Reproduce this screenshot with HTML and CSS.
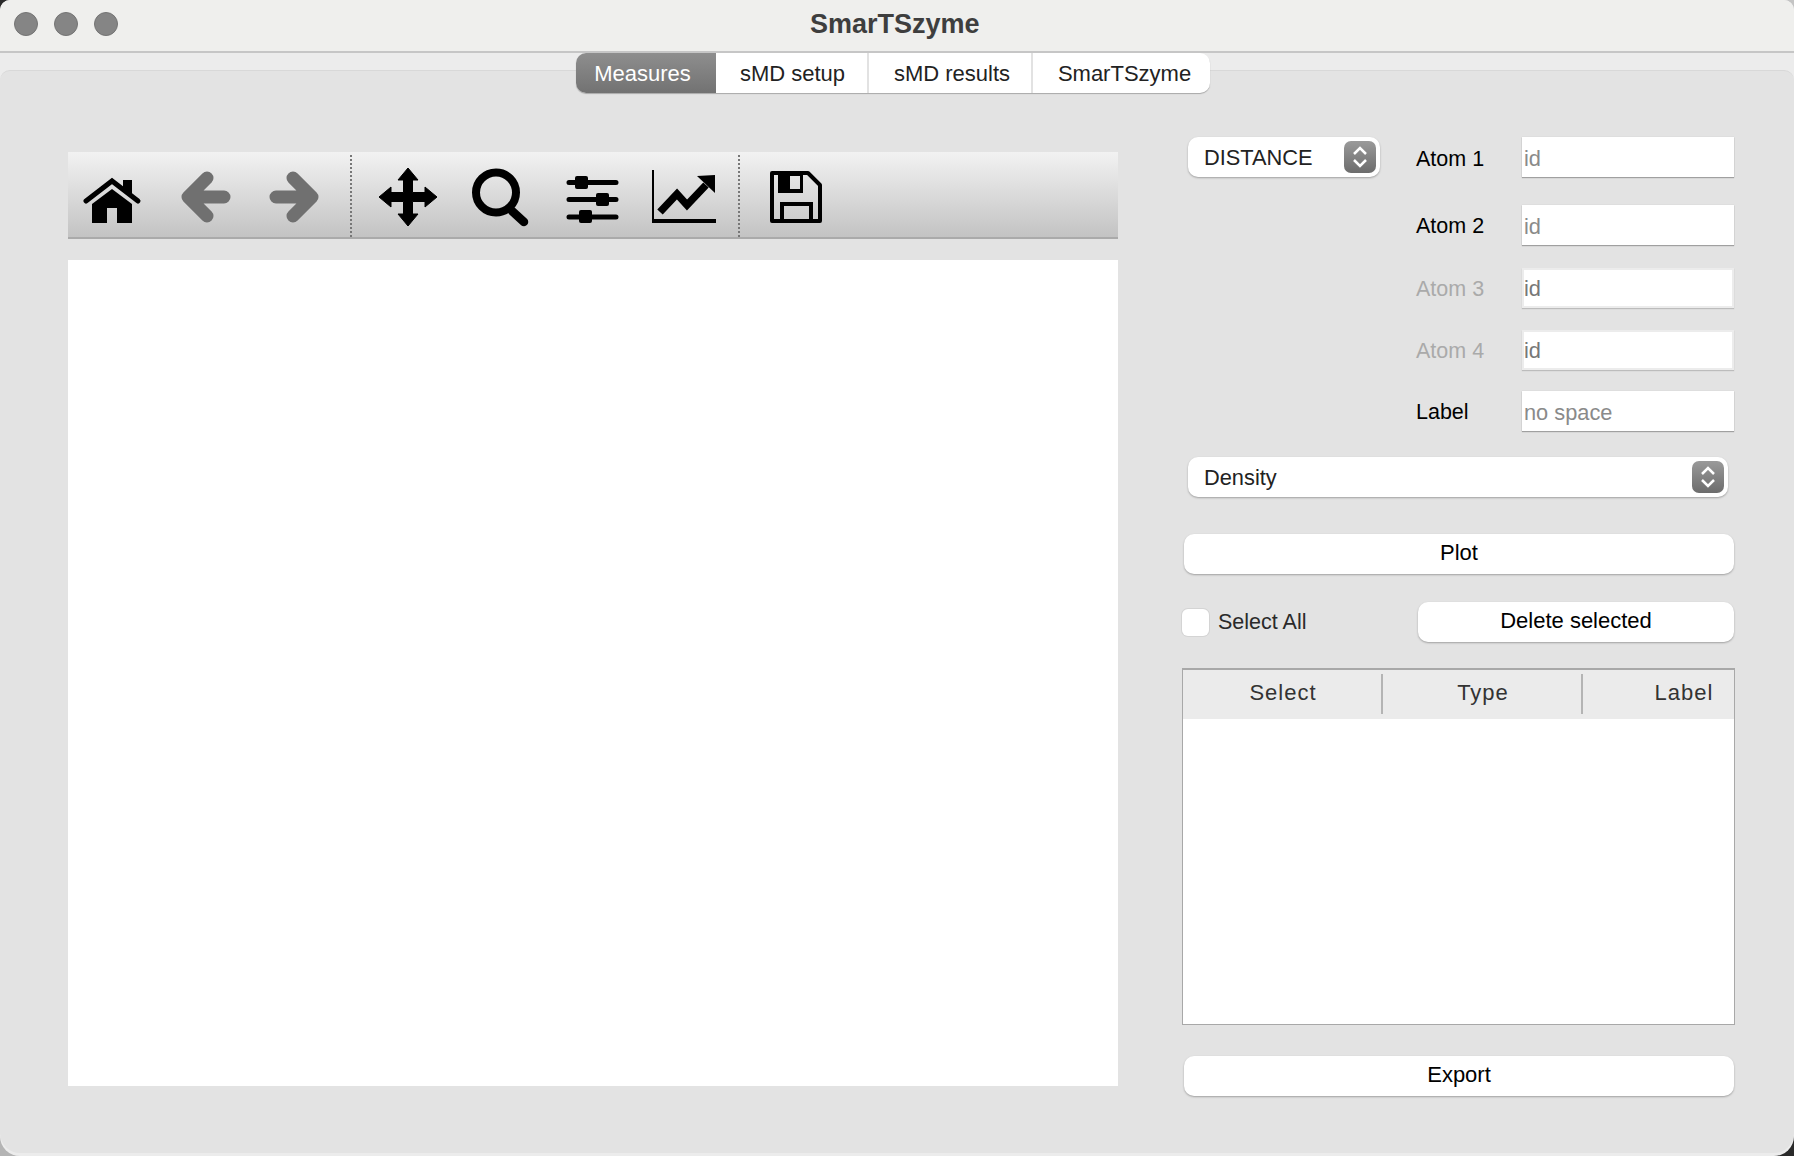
FILE: index.html
```html
<!DOCTYPE html>
<html lang="en">
<head>
<meta charset="UTF-8">
<meta name="viewport" content="width=device-width, initial-scale=1.0">
<title>SmarTSzyme</title>
<link rel="stylesheet" href="styles.css">
</head>
<body>
<div class="window">

    <header class="titlebar">
        <div class="lights">
            <span class="light"></span>
            <span class="light"></span>
            <span class="light"></span>
        </div>
        <h1 class="app-title">SmarTSzyme</h1>
    </header>

    <nav class="tabs">
        <a class="tab tab-active">Measures</a>
        <a class="tab tab-setup">sMD setup</a>
        <a class="tab tab-results">sMD results</a>
        <a class="tab tab-about">SmarTSzyme</a>
    </nav>

    <main class="pane">
        <section class="plot-area">
            <div class="toolbar">
                <svg class="tool" viewBox="0 0 60 60">
                    <path d="M4 34 30 14 56 34" fill="none" stroke="#000" stroke-width="5" stroke-linecap="round" stroke-linejoin="miter"/>
                    <path d="M41 13h9v17l-9-7z"/>
                    <path d="M30 22 10 37v19h15V41h10v15h15V37z"/>
                </svg>
                <svg class="tool" viewBox="0 0 60 60">
                    <path d="M15 30H50M33 11 14 30 33 49" fill="none" stroke="#707070" stroke-width="13" stroke-linecap="round" stroke-linejoin="round"/>
                </svg>
                <svg class="tool" viewBox="0 0 60 60">
                    <path d="M45 30H10M27 11 46 30 27 49" fill="none" stroke="#707070" stroke-width="13" stroke-linecap="round" stroke-linejoin="round"/>
                </svg>
                <span class="tool-sep"></span>
                <svg class="tool" viewBox="0 0 60 60">
                    <path d="M30 1 40 13H34.5V25.5H47V20L59 30 47 40V34.5H34.5V47H40L30 59 20 47H25.5V34.5H13V40L1 30 13 20V25.5H25.5V13H20Z" stroke="#000" stroke-width="1" stroke-linejoin="round"/>
                </svg>
                <svg class="tool" viewBox="0 0 60 60">
                    <circle cx="26" cy="25.5" r="20" fill="none" stroke="#000" stroke-width="8"/>
                    <path d="M42 44 54 55" stroke="#000" stroke-width="8.5" stroke-linecap="round"/>
                </svg>
                <svg class="tool" viewBox="0 0 60 60">
                    <path d="M7 15.5H54M7 32.5H54M7 50H54" stroke="#000" stroke-width="5" stroke-linecap="round"/>
                    <rect x="13" y="9" width="13" height="13" rx="2"/>
                    <rect x="34" y="26" width="13" height="13" rx="2"/>
                    <rect x="17" y="43" width="13" height="13" rx="2"/>
                </svg>
                <svg class="tool" viewBox="0 0 60 60">
                    <path d="M-2 3H0V52H62V56H-2Z"/>
                    <path d="M6 45 23 27 33 38 52 18" fill="none" stroke="#000" stroke-width="7.5" stroke-linejoin="miter"/>
                    <path d="M61 8 43 9 61 26Z"/>
                </svg>
                <span class="tool-sep"></span>
                <svg class="tool" viewBox="0 0 60 60">
                    <path d="M6 6H42L54 18V54H6Z" fill="none" stroke="#000" stroke-width="4" stroke-linejoin="round"/>
                    <path d="M12 6H37V26H12ZM24 9V22H34V9Z" fill-rule="evenodd"/>
                    <path d="M16 54V37H45V54" fill="none" stroke="#000" stroke-width="4"/>
                </svg>
            </div>
            <div class="canvas"></div>
        </section>

        <section class="side">
            <div class="atom-row atom-row-first">
                <div class="combo combo-short">
                    <span class="combo-text">DISTANCE</span>
                    <span class="combo-arrows">
                        <svg viewBox="0 0 32 32"><path d="M10 13 16 7 22 13M10 19 16 25 22 19" fill="none" stroke="#fff" stroke-width="2.5"/></svg>
                    </span>
                </div>
                <label class="field-label">Atom 1</label>
                <input class="field" type="text" placeholder="id">
            </div>
            <div class="atom-row row-two">
                <label class="field-label">Atom 2</label>
                <input class="field" type="text" placeholder="id">
            </div>
            <div class="atom-row row-three">
                <label class="field-label field-label-off">Atom 3</label>
                <input class="field field-off" type="text" placeholder="id" disabled>
            </div>
            <div class="atom-row row-four">
                <label class="field-label field-label-off">Atom 4</label>
                <input class="field field-off" type="text" placeholder="id" disabled>
            </div>
            <div class="atom-row row-five">
                <label class="field-label">Label</label>
                <input class="field" type="text" placeholder="no space">
            </div>

            <div class="combo combo-wide">
                <span class="combo-text">Density</span>
                <span class="combo-arrows">
                    <svg viewBox="0 0 32 32"><path d="M10 13 16 7 22 13M10 19 16 25 22 19" fill="none" stroke="#fff" stroke-width="2.5"/></svg>
                </span>
            </div>

            <button class="btn btn-plot">Plot</button>

            <div class="select-row">
                <label class="check-label"><span class="check"></span>Select All</label>
                <button class="btn btn-delete">Delete selected</button>
            </div>

            <div class="table">
                <div class="thead">
                    <div class="th">Select</div>
                    <div class="th">Type</div>
                    <div class="th th-last">Label</div>
                </div>
            </div>

            <button class="btn btn-export">Export</button>
        </section>
    </main>
</div>
</body>
</html>
```

FILE: styles.css
```css
* {
    box-sizing: border-box;
}

html {
    background: #2a2a2a;
}

body {
    margin: 0;
    width: 1794px;
    height: 1156px;
    /* what shows behind the rounded window corners */
    background: conic-gradient(#c4c4c4 90deg, #2a2a2a 90deg 180deg, #b4b4b4 180deg 270deg, #2a2a2a 270deg);
    font-family: "Liberation Sans", Arial, sans-serif;
}

.window {
    width: 1794px;
    height: 1156px;
    display: flex;
    flex-direction: column;
    overflow: hidden;
    background: #ececec;
    border-radius: 10px 10px 20px 20px;
}

/* title bar */
.titlebar {
    height: 53px;
    flex: none;
    display: flex;
    align-items: center;
    padding: 0 0 3px 14px;
    background: #efefed;
    border-bottom: 2px solid #c6c6c6;
}

.lights {
    display: flex;
    gap: 16px;
    width: 796px;
}

.light {
    width: 24px;
    height: 24px;
    border-radius: 50%;
    background: #858585;
    border: 1px solid #747474;
}

.app-title {
    margin: 0;
    font-size: 27px;
    font-weight: bold;
    color: #3e3e3e;
}

/* tabs */
.tabs {
    flex: none;
    display: flex;
    position: relative;
    z-index: 1;
    height: 40px;
    width: 634px;
    margin: 0 0 -23px 576px;
    background: #fff;
    border-radius: 10px;
    box-shadow: 0 1px 1px #a8a8a8;
    font-size: 22px;
}

.tab {
    display: flex;
    align-items: center;
    justify-content: center;
    padding-top: 2px;
    color: #222;
    border-right: 2px solid #e2e2e2;
}

.tab-active {
    width: 140px;
    padding-right: 7px;
    color: #fff;
    border-right: 0;
    border-radius: 10px 0 0 10px;
    background: linear-gradient(#8e8e8e, #727272);
}

.tab-setup {
    width: 153px;
    padding-left: 2px;
}

.tab-results {
    width: 164px;
    padding-left: 4px;
}

.tab-about {
    flex: 1;
    padding-left: 6px;
    border-right: 0;
}

/* main pane */
.pane {
    flex: 1;
    display: flex;
    align-items: flex-start;
    margin-bottom: 3px;
    padding: 81px 59px 0 68px;
    background: #e3e3e3;
    border-top: 1px solid #d8d8d8;
    border-radius: 10px 10px 20px 20px;
}

.plot-area {
    width: 1050px;
    flex: none;
}

.toolbar {
    height: 87px;
    display: flex;
    align-items: flex-start;
    padding-left: 14px;
    background: linear-gradient(#f2f2f2, #c3c3c3);
    border-bottom: 2px solid #aaa;
}

.tool {
    width: 60px;
    height: 60px;
    flex: none;
    margin-top: 15px;
    margin-right: 32px;
    overflow: visible;
}

.tool-sep {
    width: 2px;
    height: 82px;
    flex: none;
    margin-top: 3px;
    margin-left: -8px;
    margin-right: 26px;
    border-left: 2px dotted #777;
}

.canvas {
    height: 826px;
    margin-top: 21px;
    background: #fff;
}

/* right column */
.side {
    width: 553px;
    margin-left: 64px;
    margin-top: -15px;
}

.atom-row {
    display: flex;
    align-items: center;
    justify-content: flex-end;
    height: 40px;
}

.row-two {
    margin-top: 28px;
}

.row-three {
    margin-top: 23px;
}

.row-four {
    margin-top: 22px;
}

.row-five {
    margin-top: 21px;
}

.atom-row-first .combo {
    margin-right: auto;
    margin-left: 6px;
}

.atom-row-first .field-label {
    margin-top: 2px;
}

.field-label {
    width: 106px;
    padding-top: 2px;
    font-size: 21.5px;
    color: #000;
}

.field-label-off {
    color: #aaa;
}

.field {
    width: 212px;
    height: 40px;
    margin-right: 1px;
    padding: 3px 2px 0;
    font-family: inherit;
    font-size: 21.8px;
    background: #fff;
    border: 0;
    border-radius: 0;
    outline: 0;
    box-shadow: 0 1px 1px #a0a0a0, 0 0 1px #c8c8c8;
}

.field::placeholder {
    color: #8a8a8a;
    opacity: 1;
}

.field-off {
    border: 2px solid #ececec;
    box-shadow: 0 1px 1px #bcbcbc;
    padding: 1px 0 0;
}

.field-off::placeholder {
    color: #777;
}

.combo {
    height: 40px;
    display: flex;
    align-items: center;
    justify-content: space-between;
    padding: 0 4px 0 16px;
    font-size: 21.8px;
    color: #222;
    background: #fff;
    border-radius: 10px;
    box-shadow: 0 1px 2px #a0a0a0;
}

.combo-text {
    padding-top: 2px;
}

.combo-short {
    width: 192px;
}

.combo-wide {
    width: 540px;
    margin: 26px 0 0 6px;
}

.combo-arrows {
    width: 32px;
    height: 32px;
    border-radius: 7px;
    background: linear-gradient(#9a9a9a, #6c6c6c);
}

.combo-arrows svg {
    display: block;
}

.btn {
    display: block;
    height: 40px;
    padding: 0 0 2px;
    font-family: inherit;
    font-size: 22px;
    color: #000;
    background: #fff;
    border: 0;
    border-radius: 10px;
    box-shadow: 0 1px 2px #a0a0a0;
}

.btn-plot {
    width: 550px;
    margin: 37px 0 0 2px;
}

.select-row {
    display: flex;
    align-items: center;
    justify-content: space-between;
    margin-top: 28px;
}

.check-label {
    display: flex;
    align-items: center;
    gap: 9px;
    font-size: 21.5px;
    color: #2a2a2a;
}

.check {
    width: 27px;
    height: 27px;
    background: #fff;
    border-radius: 6px;
    box-shadow: 0 0 0 1px #d4d4d4;
}

.btn-delete {
    width: 316px;
    margin-right: 1px;
}

.table {
    height: 357px;
    margin-top: 26px;
    background: #fff;
    border: 1px solid #a8a8a8;
    border-top-width: 2px;
    overflow: hidden;
}

.thead {
    display: flex;
    height: 49px;
    padding: 4px 0 5px;
    background: #ebebeb;
}

.th {
    width: 200px;
    flex: none;
    padding-left: 2px;
    line-height: 38px;
    text-align: center;
    font-size: 22px;
    letter-spacing: 1px;
    color: #333;
    border-right: 2px solid #b4b4b4;
}

.th-last {
    border-right: 0;
}

.btn-export {
    width: 550px;
    margin: 31px 0 0 2px;
}
```
